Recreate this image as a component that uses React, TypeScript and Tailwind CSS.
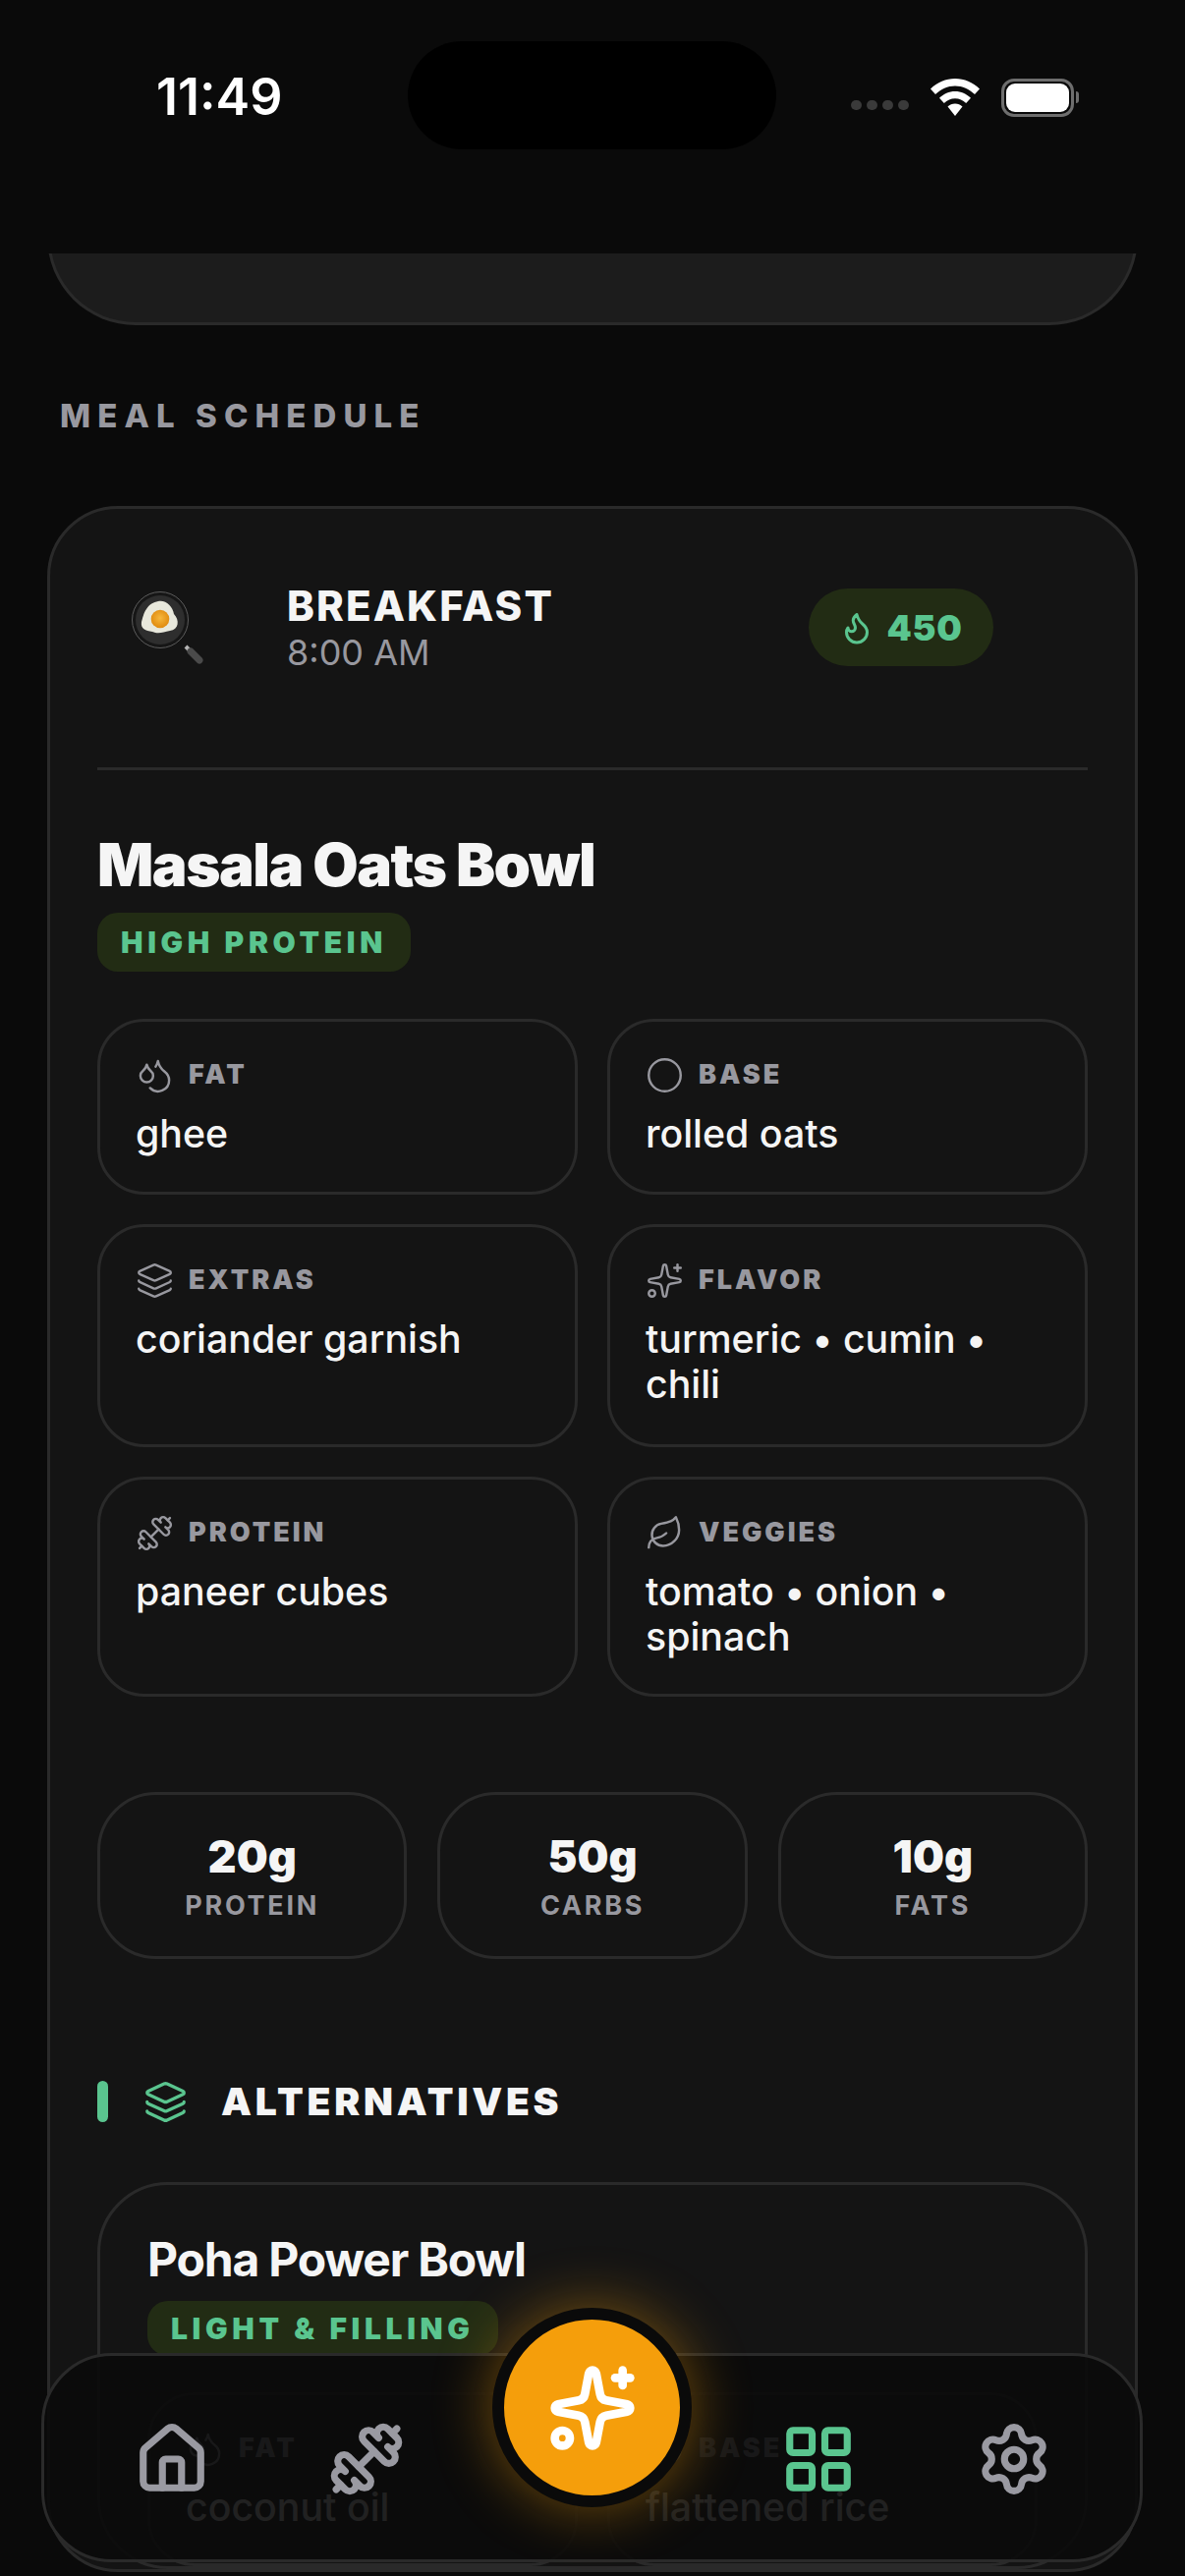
import { Circle, Droplets, Dumbbell, Flame, House, Layers, LayoutGrid, Leaf, Settings, Sparkles } from 'lucide-react'
import type { ComponentType } from 'react'

type IconType = ComponentType<{ size?: number; strokeWidth?: number; className?: string }>

function PanEmoji() {
  return (
    <svg width="90" height="90" viewBox="0 0 90 90" className="shrink-0">
      <defs>
        <radialGradient id="yolk" cx="50%" cy="45%" r="55%">
          <stop offset="0%" stopColor="#f6b73c" />
          <stop offset="100%" stopColor="#e08a0e" />
        </radialGradient>
      </defs>
      <path d="M60 61 L65 66" stroke="#b5b5b5" strokeWidth="4" />
      <path d="M65 66 L74 75" stroke="#4a4a4a" strokeWidth="7" strokeLinecap="round" />
      <circle cx="34" cy="34" r="28.500" fill="#161616" stroke="#5c5c5c" strokeWidth="1" />
      <circle cx="34" cy="34" r="25" fill="#2e2e2e" />
      <path d="M32 15 C39 13 47 20 48 28 C54 34 53 44 44 45 C37 46 33 49 26 46 C19 45 14 43 15 36 C16 33 17 27 20 23 C23 18 27 16 32 15Z" fill="#e8e8dc" />
      <circle cx="34" cy="33" r="9.300" fill="url(#yolk)" />
    </svg>
  )
}

function Ingredient({ icon: Icon, label, value, h }: { icon: IconType; label: string; value: string; h: string }) {
  return (
    <div className={`rounded-[48px] border-[3px] border-[#2a2a2a] px-[36px] pt-[33px] ${h}`}>
      <div className="flex items-center gap-[15px] h-[42px]">
        <Icon size={39} strokeWidth={1.5} className="text-[#98989f] shrink-0" />
        <span className="text-[27px] font-black tracking-[0.11em] text-[#98989f]">{label}</span>
      </div>
      <p className="mt-[16px] text-[39.3px] leading-[46px] font-medium text-[#f5f5f5]">{value}</p>
    </div>
  )
}

function Macro({ value, label }: { value: string; label: string }) {
  return (
    <div className="flex h-[170px] flex-1 flex-col items-center rounded-[60px] border-[3px] border-[#2a2a2a] pt-[36px]">
      <span className="text-[45px] leading-[54px] font-black text-[#f5f5f5]">{value}</span>
      <span className="mt-[7px] text-[27px] leading-[32px] font-bold tracking-[0.1em] text-[#98989f]">{label}</span>
    </div>
  )
}

function NavIcon({ icon: Icon, active }: { icon: IconType; active?: boolean }) {
  return <Icon size={78} strokeWidth={2.2} className={active ? 'text-[#5ac58f] shrink-0' : 'text-[#9a9aa2] shrink-0'} />
}

export default function App() {
  return (
    <div className="relative h-[2622px] w-[1206px] overflow-hidden bg-[#0a0a0a] font-['Inter',sans-serif]">
      {/* status bar */}
      <div className="relative h-[258px]">
        <div className="flex h-[198px] items-center justify-between pl-[159px] pr-[108px]">
          <span className="text-[52px] font-semibold text-white">11:49</span>
          <div className="flex items-center gap-[22px]">
            <div className="flex gap-[5px] pt-[16px]">
              <i className="block h-[10px] w-[11px] rounded-full bg-[#3a3a3a]" />
              <i className="block h-[10px] w-[11px] rounded-full bg-[#3a3a3a]" />
              <i className="block h-[10px] w-[11px] rounded-full bg-[#3a3a3a]" />
              <i className="block h-[10px] w-[11px] rounded-full bg-[#3a3a3a]" />
            </div>
            <svg width="50" height="38" viewBox="0 0 50 38" fill="white">
              <path d="M25 0C15.500 0 7 3.800 0 10.500L5 16C10.500 10.800 17.500 7.500 25 7.500S39.500 10.800 45 16L50 10.500C43 3.800 34.500 0 25 0Z" />
              <path d="M25 13C18.800 13 13.500 15.500 9 19.800L13.800 25C17 22 20.800 20.200 25 20.200S33 22 36.200 25L41 19.800C36.500 15.500 31.200 13 25 13Z" />
              <path d="M25 25.500C22 25.500 19.600 26.600 17.500 28.500L25 38L32.500 28.500C30.400 26.600 28 25.500 25 25.500Z" />
            </svg>
            <div className="flex items-center gap-[2px]">
              <div className="h-[39px] w-[74px] rounded-[13px] border-[3px] border-[#6e6e6e] p-[2px]">
                <div className="h-full w-full rounded-[9px] bg-white" />
              </div>
              <div className="h-[12px] w-[3px] rounded-r-full bg-[#6e6e6e]" />
            </div>
          </div>
        </div>
        <div className="absolute left-[415px] top-[42px] h-[110px] w-[375px] rounded-[55px] bg-black" />
      </div>

      {/* end of the card above */}
      <div className="mx-[48px] h-[73px] overflow-hidden">
        <div className="-mt-[30px] h-[103px] rounded-b-[90px] border-x-[3px] border-b-[3px] border-[#2a2a2a] bg-[#1c1c1c]" />
      </div>

      <h2 className="ml-[61px] mt-[72px] text-[33px] leading-[40px] font-extrabold tracking-[0.215em] text-[#98989f]">MEAL SCHEDULE</h2>

      {/* breakfast card */}
      <div className="mx-[48px] mt-[72px] rounded-[72px] border-[3px] border-[#2a2a2a] bg-[#141414] px-[48px]">
        <div className="flex h-[266px] items-start border-b-[3px] border-[#2a2a2a] pt-[76px]">
          <div className="ml-[30px] mt-[3px] w-[163px]">
            <PanEmoji />
          </div>
          <div className="w-[531px]">
            <p className="text-[42px] leading-[46px] font-extrabold tracking-[0.05em] text-[#f5f5f5]">BREAKFAST</p>
            <p className="mt-[3px] text-[36px] leading-[42px] text-[#98989f]">8:00 AM</p>
          </div>
          <div className="mt-[5px] flex h-[79px] w-[188px] items-center justify-center gap-[12px] rounded-[40px] bg-[#222c14]">
            <Flame size={36} strokeWidth={2} className="text-[#5ac58f]" />
            <span className="text-[36px] font-black tracking-[0.02em] text-[#5ac58f]">450</span>
          </div>
        </div>

        <h3 className="mt-[60px] text-[60px] leading-[72px] font-black tracking-[-0.025em] text-[#f5f5f5]">Masala Oats Bowl</h3>
        <span className="mt-[13px] block w-fit rounded-[21px] bg-[#222c14] px-[24px] py-[12px] text-[30px] leading-[36px] font-black tracking-[0.155em] text-[#5ac58f]">HIGH PROTEIN</span>

        <div className="mt-[48px] grid grid-cols-2 gap-x-[30px] gap-y-[30px]">
          <Ingredient icon={Droplets} label="FAT" value="ghee" h="h-[179px]" />
          <Ingredient icon={Circle} label="BASE" value="rolled oats" h="h-[179px]" />
          <Ingredient icon={Layers} label="EXTRAS" value="coriander garnish" h="h-[227px]" />
          <Ingredient icon={Sparkles} label="FLAVOR" value="turmeric • cumin • chili" h="h-[227px]" />
          <Ingredient icon={Dumbbell} label="PROTEIN" value="paneer cubes" h="h-[224px]" />
          <Ingredient icon={Leaf} label="VEGGIES" value="tomato • onion • spinach" h="h-[224px]" />
        </div>

        <div className="mt-[97px] flex gap-[31px]">
          <Macro value="20g" label="PROTEIN" />
          <Macro value="50g" label="CARBS" />
          <Macro value="10g" label="FATS" />
        </div>

        <div className="mt-[123px] flex h-[44px] items-center">
          <div className="h-[42px] w-[11px] rounded-full bg-[#5ac58f]" />
          <Layers size={45} strokeWidth={1.75} className="ml-[36px] text-[#5ac58f]" />
          <span className="ml-[34px] text-[39px] font-black tracking-[0.095em] text-[#f5f5f5]">ALTERNATIVES</span>
        </div>

        {/* alternative meal */}
        <div className="mt-[60px] rounded-[72px] border-[3px] border-[#2a2a2a] px-[48px] pt-[47px]">
          <h3 className="text-[48px] leading-[58px] font-bold tracking-[-0.025em] text-[#f5f5f5]">Poha Power Bowl</h3>
          <span className="mt-[13px] block w-fit rounded-[21px] bg-[#222c14] px-[24px] py-[10px] text-[30px] leading-[36px] font-black tracking-[0.155em] text-[#5ac58f]">LIGHT &amp; FILLING</span>
          <div className="mt-[37px] grid grid-cols-2 gap-x-[30px] gap-y-[30px]">
            <Ingredient icon={Droplets} label="FAT" value="coconut oil" h="h-[177px]" />
            <Ingredient icon={Circle} label="BASE" value="flattened rice" h="h-[177px]" />
          </div>
        </div>
      </div>

      {/* bottom nav */}
      <div className="absolute left-[42px] top-[2395px] flex h-[213px] w-[1121px] items-center rounded-[72px] border-[3px] border-[#2a2a2a] bg-[#0a0a0a]/90 pl-[91px] pt-[3px]">
        <NavIcon icon={House} />
        <div className="ml-[120px]">
          <NavIcon icon={Dumbbell} />
        </div>
        <div className="w-[382px] shrink-0" />
        <NavIcon icon={LayoutGrid} active />
        <div className="ml-[121px]">
          <NavIcon icon={Settings} />
        </div>
      </div>
      <div className="absolute left-[501px] top-[2349px] flex h-[203px] w-[203px] items-center justify-center rounded-full border-[12px] border-[#0a0a0a] bg-[#f59e0b] shadow-[0_0_60px_rgba(245,158,11,0.45)]">
        <Sparkles size={92} strokeWidth={2.25} className="text-white" />
      </div>
    </div>
  )
}
